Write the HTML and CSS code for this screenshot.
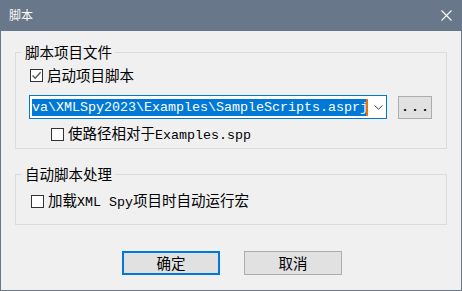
FILE: index.html
```html
<!DOCTYPE html>
<html lang="zh-CN">
<head>
<meta charset="utf-8">
<title>脚本</title>
<link rel="stylesheet" href="styles.css">
</head>
<body>
<div class="window">
  <div class="titlebar">
    <span class="title">脚本</span>
    <svg class="close" width="11" height="11" viewBox="0 0 11 11"><path d="M0.5 0.5 L10.5 10.5 M10.5 0.5 L0.5 10.5" stroke="#fff" stroke-width="1.1" fill="none"/></svg>
  </div>
  <div class="body">
    <div class="group g1">
      <span class="caption">脚本项目文件</span>
      <div class="check r1">
        <span class="box"><svg width="11" height="11" viewBox="0 0 11 11"><path d="M1.5 5.5 L4.2 8.3 L9.6 2.2" stroke="#555" stroke-width="1.3" fill="none"/></svg></span>
        <span>启动项目脚本</span>
      </div>
      <div class="combo-row">
        <div class="combo">
          <span class="sel">va\XMLSpy2023\Examples\SampleScripts.asprj</span>
          <svg class="arrow" width="9" height="5" viewBox="0 0 9 5"><path d="M0.5 0.5 L4.5 4.2 L8.5 0.5" stroke="#444" stroke-width="1" fill="none"/></svg>
        </div>
        <button class="btn browse">...</button>
      </div>
      <div class="check r3">
        <span class="box"></span>
        <span>使路径相对于<span class="lat">Examples.spp</span></span>
      </div>
    </div>
    <div class="group g2">
      <span class="caption">自动脚本处理</span>
      <div class="check r4">
        <span class="box"></span>
        <span>加载<span class="lat">XML Spy</span>项目时自动运行宏</span>
      </div>
    </div>
    <div class="buttons">
      <button class="btn push default">确定</button>
      <button class="btn push">取消</button>
    </div>
  </div>
</div>
</body>
</html>
```

FILE: styles.css
```css
* { box-sizing: border-box; }
html, body { margin: 0; padding: 0; }
body {
  background: #f0f0f0;
  font-family: "Noto Sans CJK SC", "Noto Sans", sans-serif;
  font-size: 14.5px;
  color: #000;
}
.window {
  width: 462px;
  height: 291px;
  border: 1px solid #6a7889;
  border-top: none;
  background: #f0f0f0;
  display: flex;
  flex-direction: column;
}
.titlebar {
  height: 31px;
  margin: 0 -1px;
  background: #687789;
  display: flex;
  align-items: center;
  justify-content: space-between;
  padding: 0 10px 0 9px;
}
.title {
  color: #fff;
  font-size: 12px;
  line-height: 14px;
  margin-top: -1px;
}
.close { margin-top: -1px; }
.body {
  padding: 21px 14px 0 14px;
}
.group {
  display: flex;
  flex-direction: column;
  align-items: flex-start;
  border: 1px solid #dcdcdc;
  padding-bottom: 4px;
}
.caption {
  margin-top: -9px;
  margin-left: 6px;
  padding: 0 3px;
  height: 16px;
  line-height: 16px;
  background: #f0f0f0;
  white-space: nowrap;
}
.check {
  display: flex;
  align-items: center;
  height: 20px;
  line-height: 20px;
  white-space: nowrap;
}
.box {
  width: 13px;
  height: 13px;
  border: 1px solid #333;
  background: #fff;
  margin-right: 4px;
  flex: none;
  display: flex;
}
.lat {
  font-family: "Liberation Mono", monospace;
  font-size: 13.33px;
}
.r1 { margin-top: 5px; padding-left: 14px; }
.combo-row {
  display: flex;
  align-items: flex-start;
  margin-top: 10px;
  padding-left: 13px;
}
.combo {
  width: 358px;
  height: 24px;
  border: 1px solid #0078d7;
  background: #fff;
  display: flex;
  align-items: center;
  padding-left: 2px;
}
.sel {
  height: 17px;
  width: 336px;
  background: #0078d7;
  color: #fff;
  font-family: "Liberation Mono", monospace;
  font-size: 13.33px;
  line-height: 17px;
  white-space: nowrap;
  overflow: hidden;
  border-right: 2px solid #e8710a;
}
.arrow { margin-left: 6px; }
.btn {
  font-family: inherit;
  font-size: 14.5px;
  color: #000;
  background: #e1e1e1;
  border: 1px solid #adadad;
  padding: 0;
  margin: 0;
}
.browse {
  width: 34px;
  height: 23px;
  margin-top: 1px;
  margin-left: 11px;
  padding-left: 2px;
  font-family: "Liberation Mono", monospace;
  font-size: 13.33px;
  font-weight: bold;
  letter-spacing: 2px;
  line-height: 21px;
}
.r3 { margin-top: 5px; padding-left: 35px; }
.g2 { margin-top: 25px; padding-bottom: 13px; }
.r4 { margin-top: 9px; padding-left: 15px; }
.buttons {
  display: flex;
  gap: 24px;
  margin-top: 26px;
  padding-left: 107px;
}
.push {
  width: 98px;
  height: 24px;
  line-height: 20px;
}
.push.default {
  border: 2px solid #0078d7;
}
```
